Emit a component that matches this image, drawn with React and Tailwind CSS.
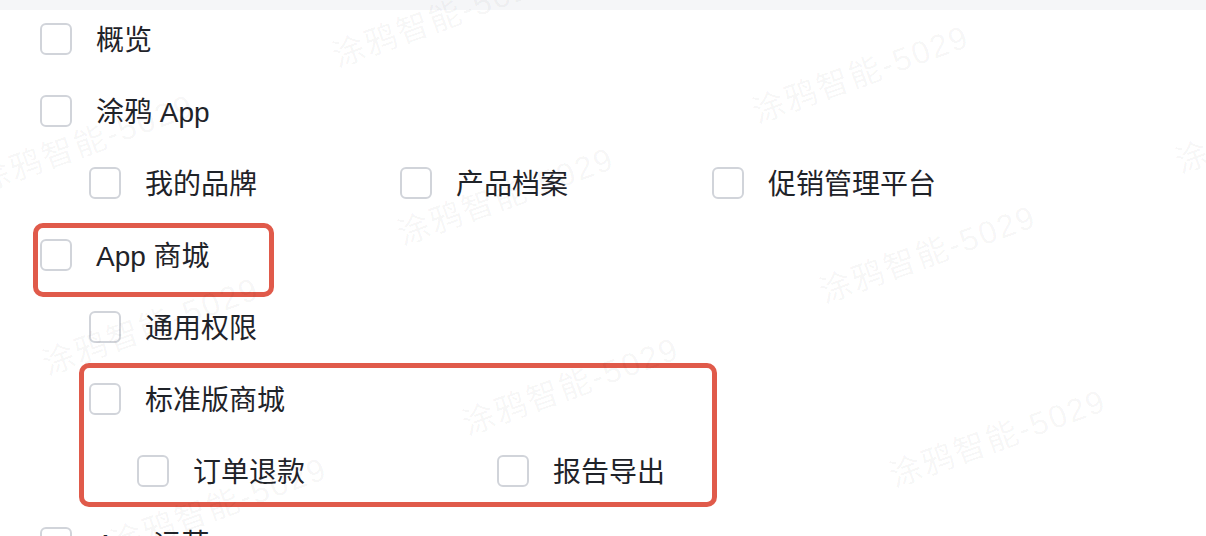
// Permission tree with checkboxes, review highlights and a tiled watermark.
const watermarks = [
    'left-[340px] top-[38px]',
    'left-[760px] top-[94px]',
    'left-[1183px] top-[144px]',
    'left-[-15px] top-[163px]',
    'left-[405px] top-[216px]',
    'left-[827px] top-[274px]',
    'left-[50px] top-[346px]',
    'left-[470px] top-[406px]',
    'left-[897px] top-[458px]',
    'left-[118px] top-[526px]',
];

function Box() {
    return <span className="block w-8 h-8 shrink-0 rounded-[6px] border-2 border-[#d1d4da] bg-white" />;
}

function Item({ label, className = '' }) {
    return (
        <label className={`flex items-center gap-6 ${className}`}>
            <Box />
            <span className="translate-y-[2px] text-[28px] leading-[32px] text-[#1f2329] whitespace-nowrap">{label}</span>
        </label>
    );
}

export default function App() {
    return (
        <div className="relative h-[536px] w-[1206px] overflow-hidden bg-white font-['Liberation_Sans','Noto_Sans_CJK_SC',sans-serif]">
            <div className="h-[10px] bg-[#f5f6f8]" />

            <div className="flex flex-col gap-10 pt-[13px] pl-10">
                <Item label="概览" />
                <Item label="涂鸦 App" />
                <div className="flex pl-[49px]">
                    <Item label="我的品牌" className="w-[311px]" />
                    <Item label="产品档案" className="w-[312px]" />
                    <Item label="促销管理平台" />
                </div>

                {/* highlighted: App 商城 */}
                <div className="relative self-start">
                    <Item label="App 商城" />
                    <span className="absolute left-[-7px] top-[-16px] w-[241px] h-[74px] rounded-[10px] border-[5px] border-[#e05a4a] pointer-events-none" />
                </div>

                <div className="pl-[49px]">
                    <Item label="通用权限" />
                </div>

                {/* highlighted: 标准版商城 and its children */}
                <div className="relative ml-[49px] self-start flex flex-col gap-10">
                    <Item label="标准版商城" />
                    <div className="flex pl-12">
                        <Item label="订单退款" className="w-[360px]" />
                        <Item label="报告导出" />
                    </div>
                    <span className="absolute left-[-10px] top-[-20px] w-[638px] h-[144px] rounded-[10px] border-[5px] border-[#e05a4a] pointer-events-none" />
                </div>

                <Item label="App 运营" />
            </div>

            {watermarks.map((pos) => (
                <span
                    key={pos}
                    className={`absolute ${pos} origin-bottom-left rotate-[-20deg] text-[32px] leading-[36px] tracking-[2px] whitespace-nowrap text-black/[0.045] pointer-events-none select-none`}
                >
                    涂鸦智能-5029
                </span>
            ))}
        </div>
    );
}
